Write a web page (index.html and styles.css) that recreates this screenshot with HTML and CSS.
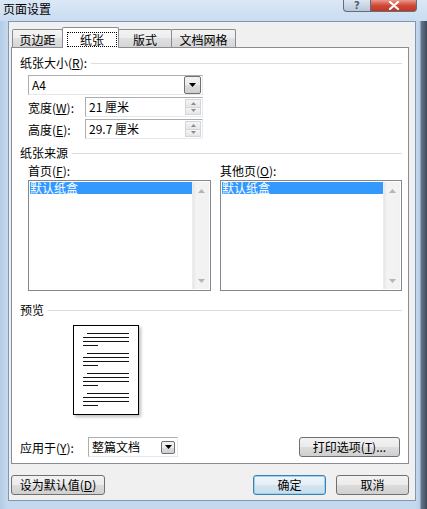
FILE: index.html
```html
<!DOCTYPE html>
<html>
<head>
<meta charset="utf-8">
<title>页面设置</title>
<link rel="stylesheet" href="styles.css">
</head>
<body>
<div class="window">
  <div class="titlebar">
    <span class="title">页面设置</span>
    <div class="caption-btns">
      <span class="cbtn help">?</span>
      <span class="cbtn close"><svg width="12" height="9" viewBox="0 0 12 9"><path d="M2 1 L10 8 M10 1 L2 8" stroke="#fff" stroke-width="2.2" stroke-linecap="round"/></svg></span>
    </div>
  </div>
  <div class="frame">
    <div class="client">
      <div class="tabs">
        <div class="tab t1">页边距</div>
        <div class="tab t2 active"><span class="focus">纸张</span></div>
        <div class="tab t3">版式</div>
        <div class="tab t4">文档网格</div>
      </div>
      <div class="panel">
        <div class="group-head"><span>纸张大小(<u>R</u>):</span><span class="rule"></span></div>
        <div class="indent">
          <div class="combo size-combo">
            <span class="cval">A4</span>
            <span class="ddbtn"><svg width="7" height="4" viewBox="0 0 7 4"><path d="M0 0 H7 L3.5 4 Z" fill="#000"/></svg></span>
          </div>
          <div class="field-row">
            <span class="flabel">宽度(<u>W</u>):</span>
            <div class="spin">
              <span class="sval">21 厘米</span>
              <span class="spinbtns">
                <span class="sb"><svg width="5" height="3" viewBox="0 0 5 3"><path d="M0 3 L2.5 0 L5 3 Z" fill="#8c8c8c"/></svg></span>
                <span class="sb"><svg width="5" height="3" viewBox="0 0 5 3"><path d="M0 0 L2.5 3 L5 0 Z" fill="#8c8c8c"/></svg></span>
              </span>
            </div>
          </div>
          <div class="field-row">
            <span class="flabel">高度(<u>E</u>):</span>
            <div class="spin">
              <span class="sval">29.7 厘米</span>
              <span class="spinbtns">
                <span class="sb"><svg width="5" height="3" viewBox="0 0 5 3"><path d="M0 3 L2.5 0 L5 3 Z" fill="#8c8c8c"/></svg></span>
                <span class="sb"><svg width="5" height="3" viewBox="0 0 5 3"><path d="M0 0 L2.5 3 L5 0 Z" fill="#8c8c8c"/></svg></span>
              </span>
            </div>
          </div>
        </div>

        <div class="group-head g2"><span>纸张来源</span><span class="rule"></span></div>
        <div class="sources">
          <span class="llabel">首页(<u>F</u>):</span>
          <span class="llabel">其他页(<u>O</u>):</span>
          <div class="listbox">
            <div class="items"><div class="item sel">默认纸盒</div></div>
            <div class="vscroll">
              <svg width="7" height="4" viewBox="0 0 7 4"><path d="M0 4 L3.5 0 L7 4 Z" fill="#b4b4b4"/></svg>
              <svg width="7" height="4" viewBox="0 0 7 4"><path d="M0 0 L3.5 4 L7 0 Z" fill="#b4b4b4"/></svg>
            </div>
          </div>
          <div class="listbox">
            <div class="items"><div class="item sel">默认纸盒</div></div>
            <div class="vscroll">
              <svg width="7" height="4" viewBox="0 0 7 4"><path d="M0 4 L3.5 0 L7 4 Z" fill="#b4b4b4"/></svg>
              <svg width="7" height="4" viewBox="0 0 7 4"><path d="M0 0 L3.5 4 L7 0 Z" fill="#b4b4b4"/></svg>
            </div>
          </div>
        </div>

        <div class="group-head g3"><span>预览</span><span class="rule"></span></div>
        <div class="preview">
          <svg width="66" height="90" viewBox="0 0 66 90">
            <rect x="0.5" y="0.5" width="65" height="89" fill="#fff" stroke="#000"/>
            <g stroke="#111" stroke-width="1.2">
              <path d="M14 8.5 H56 M10 12.5 H56 M10 16.5 H56 M10 20.5 H25"/>
              <path d="M14 28.5 H56 M10 32.5 H56 M10 36.5 H56 M10 40.5 H25"/>
              <path d="M14 48.5 H56 M10 52.5 H56 M10 56.5 H56 M10 60.5 H25"/>
              <path d="M14 68.5 H56 M10 72.5 H56 M10 76.5 H56 M10 80.5 H25"/>
            </g>
          </svg>
        </div>

        <div class="apply-row">
          <span class="alabel">应用于(<u>Y</u>):</span>
          <div class="combo apply-combo">
            <span class="cval">整篇文档</span>
            <span class="ddbtn small"><svg width="7" height="4" viewBox="0 0 7 4"><path d="M0 0 H7 L3.5 4 Z" fill="#000"/></svg></span>
          </div>
          <button class="btn print-btn">打印选项(<u>T</u>)...</button>
        </div>
      </div>

      <div class="footer">
        <button class="btn default-btn">设为默认值(<u>D</u>)</button>
        <div class="ok-cancel">
          <button class="btn ok-btn">确定</button>
          <button class="btn">取消</button>
        </div>
      </div>
    </div>
  </div>
</div>
</body>
</html>
```
FILE: styles.css
```css
* { box-sizing: border-box; }
html, body { margin: 0; padding: 0; }
body {
  font-family: "Noto Sans CJK SC", "Noto Sans", sans-serif;
  font-size: 12px;
  color: #000;
  background: #4a5566;
}
u { text-decoration: underline; text-underline-offset: 1px; }

.window {
  width: 427px;
  height: 509px;
  overflow: hidden;
  display: flex;
  flex-direction: column;
  background: linear-gradient(to right, #b3cbe6 0, #c4d8ee 7px, #c4d8ee 416px, #b9cee6 420px, #66778e 421px, #3f4a5a 427px);
}

.titlebar {
  height: 21px;
  display: flex;
  align-items: flex-start;
  padding: 0 10px 0 3px;
  background: linear-gradient(to bottom, #dbe8f6, #c9dcf0);
}
.title {
  line-height: 16px;
  padding-top: 1px;
  font-size: 12px;
}
.caption-btns {
  margin-left: auto;
  display: flex;
}
.cbtn {
  height: 12px;
  display: flex;
  align-items: center;
  justify-content: center;
  border: 1px solid #5d6e85;
  border-top: none;
}
.help {
  width: 28px;
  border-radius: 0 0 0 4px;
  background: linear-gradient(#dde6f1, #b8c6d8);
  color: #4d5e75;
  font-family: "DejaVu Sans", sans-serif;
  font-size: 10px;
  font-weight: bold;
  line-height: 10px;
}
.close {
  width: 46px;
  border-left: none;
  border-radius: 0 0 4px 0;
  background: linear-gradient(#e89a8c, #d1493a 50%, #c23521);
}

.frame {
  flex: 1;
  padding: 0 11px 8px 8px;
  display: flex;
}
.client {
  flex: 1;
  background: #f0f0f0;
  border: 1px solid #8196b0;
  padding: 5px 6px 4px 2px;
  display: flex;
  flex-direction: column;
}

.tabs {
  display: flex;
  align-items: flex-end;
  height: 20px;
  padding-left: 1px;
}
.tab {
  height: 18px;
  border: 1px solid #898c95;
  border-bottom: none;
  border-radius: 2px 2px 0 0;
  background: linear-gradient(#f4f4f4, #ececec 50%, #e0e0e0 50%, #d6d6d6);
  text-align: center;
  line-height: 17px;
  padding-top: 1px;
}
.t1 { width: 51px; }
.t2 { width: 57px; margin-left: -1px; }
.t3 { width: 54px; margin-left: -1px; }
.t4 { width: 65px; margin-left: -1px; }
.tab.active {
  height: 21px;
  margin-bottom: -1px;
  background: #fff;
  position: relative;
  z-index: 2;
  padding: 4px 1px 0 4px;
}
.focus {
  display: block;
  height: 15px;
  border: 1px dotted #000;
  line-height: 13px;
}

.panel {
  background: #fff;
  border: 1px solid #898c95;
  height: 417px;
  padding: 8px 6px 0 8px;
  display: flex;
  flex-direction: column;
}

.group-head {
  height: 14px;
  display: flex;
  align-items: center;
  line-height: 14px;
}
.group-head .rule {
  flex: 1;
  height: 1px;
  background: #d5dfe5;
  margin-left: 4px;
}
.group-head.g2 { margin-top: 7px; }
.group-head.g3 { margin-top: 12px; }

.indent { padding-left: 8px; }

.combo {
  height: 20px;
  border: 1px solid #abadb3;
  border-right-color: #e3e9ef;
  border-bottom-color: #e3e9ef;
  background: #fff;
  display: flex;
  align-items: center;
  padding-left: 3px;
}
.size-combo {
  width: 175px;
  margin-top: 5px;
  padding-right: 1px;
}
.cval { flex: 1; line-height: 16px; }
.ddbtn {
  width: 17px;
  height: 18px;
  border: 1px solid #707070;
  border-radius: 2px;
  background: linear-gradient(#f2f2f2, #ebebeb 50%, #dddddd 50%, #cfcfcf);
  display: flex;
  align-items: center;
  justify-content: center;
}
.ddbtn.small {
  width: 14px;
  height: 13px;
  margin-right: 2px;
}

.field-row {
  display: flex;
  align-items: center;
  height: 20px;
  margin-top: 2px;
}
.flabel { width: 57px; }
.spin {
  width: 118px;
  height: 20px;
  border: 1px solid #abadb3;
  border-right-color: #e3e9ef;
  border-bottom-color: #e3e9ef;
  display: flex;
  align-items: center;
  padding: 0 1px 0 3px;
}
.sval { flex: 1; line-height: 16px; }
.spinbtns {
  width: 16px;
  height: 16px;
  display: flex;
  flex-direction: column;
}
.sb {
  flex: 1;
  border: 1px solid #d2d5da;
  background: linear-gradient(#f5f5f5, #e6e6e6);
  display: flex;
  align-items: center;
  justify-content: center;
}
.sb + .sb { border-top: none; }

.sources {
  display: grid;
  grid-template-columns: 183px 182px;
  column-gap: 9px;
  padding-left: 8px;
  margin-top: 4px;
}
.llabel {
  height: 16px;
  line-height: 14px;
}
.listbox {
  height: 111px;
  border: 1px solid #828790;
  background: #fff;
  display: flex;
  padding: 1px;
}
.items { flex: 1; }
.item {
  height: 12px;
  line-height: 12px;
  padding-left: 0;
}
.item.sel {
  background: #3399ff;
  color: #fff;
}
.vscroll {
  width: 17px;
  background: linear-gradient(to right, #e6e6e6, #f3f3f3 3px, #f1f1f1);
  border-left: 1px solid #ececec;
  display: flex;
  flex-direction: column;
  align-items: center;
  justify-content: space-between;
  padding: 7px 0 6px;
}

.preview {
  margin: 8px 0 0 53px;
  width: 66px;
  height: 90px;
  box-shadow: 2px 2px 3px rgba(0, 0, 0, 0.25);
}
.preview svg { display: block; }

.apply-row {
  display: flex;
  align-items: center;
  height: 20px;
  margin-top: 22px;
}
.alabel { width: 68px; }
.apply-combo {
  width: 90px;
  padding-left: 3px;
}
.btn {
  font-family: "Noto Sans CJK SC", "Noto Sans", sans-serif;
  font-size: 12px;
  color: #000;
  height: 20px;
  border: 1px solid #707070;
  border-radius: 3px;
  background: linear-gradient(#f2f2f2, #ebebeb 50%, #dddddd 50%, #cfcfcf);
  padding: 0;
  display: flex;
  align-items: center;
  justify-content: center;
  line-height: 16px;
}
.print-btn {
  width: 101px;
  margin-left: auto;
  margin-right: 2px;
}

.footer {
  display: flex;
  align-items: center;
  margin-top: 11px;
}
.default-btn { width: 94px; }
.ok-cancel {
  margin-left: auto;
  display: flex;
  gap: 10px;
}
.ok-cancel .btn { width: 73px; }
.ok-btn {
  border-color: #3c7fb1;
  box-shadow: inset 0 0 0 1px #97d4f0;
  background: linear-gradient(#f0f6fa, #e4eef5 50%, #d5e6f1 50%, #c8dcea);
}
```
